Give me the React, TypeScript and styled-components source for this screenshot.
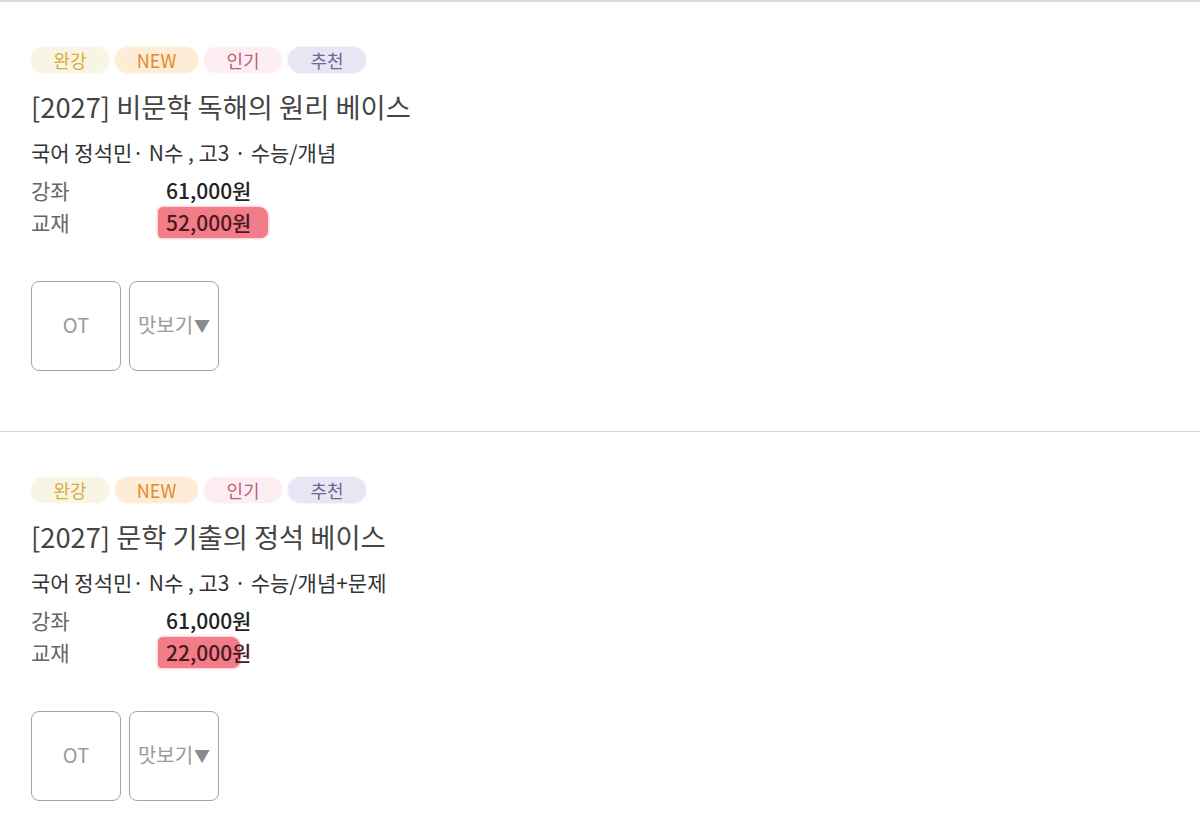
import React from 'react'
import styled, { createGlobalStyle } from 'styled-components'

const GlobalStyle = createGlobalStyle`
  body {
    margin: 0;
    background: #fff;
    font-family: "Noto Sans CJK KR", "Noto Sans", sans-serif;
    color: #333;
  }
`

interface Course {
  title: string
  meta: string
  lecture: string
  book: string
  marker: number
}

const courses: Course[] = [
  {
    title: '[2027] 비문학 독해의 원리 베이스',
    meta: '국어 정석민· N수 , 고3 · 수능/개념',
    lecture: '61,000원',
    book: '52,000원',
    marker: 110,
  },
  {
    title: '[2027] 문학 기출의 정석 베이스',
    meta: '국어 정석민· N수 , 고3 · 수능/개념+문제',
    lecture: '61,000원',
    book: '22,000원',
    marker: 82,
  },
]

const tags = [
  { label: '완강', bg: '#f8f5e4', fg: '#dcaa3a' },
  { label: 'NEW', bg: '#fdecd6', fg: '#e3892c' },
  { label: '인기', bg: '#fdeef2', fg: '#c25c7e' },
  { label: '추천', bg: '#e8e6f5', fg: '#6c6796' },
]

export default function App() {
  return (
    <>
      <GlobalStyle />
      <List>
        {courses.map(c => (
          <CourseCard key={c.title} course={c} />
        ))}
      </List>
    </>
  )
}

function CourseCard({ course }: { course: Course }) {
  return (
    <Section>
      <TagRow>
        {tags.map(t => (
          <Tag key={t.label} $bg={t.bg} $fg={t.fg}>{t.label}</Tag>
        ))}
      </TagRow>
      <Title>{course.title}</Title>
      <Meta>{course.meta}</Meta>
      <Prices>
        <PriceLabel>강좌</PriceLabel>
        <PriceValue>{course.lecture}</PriceValue>
        <PriceLabel>교재</PriceLabel>
        <PriceValue>
          <Marked $reach={course.marker}>{course.book}</Marked>
        </PriceValue>
      </Prices>
      <Buttons>
        <SquareButton>OT</SquareButton>
        <SquareButton>
          맛보기<Arrow>▼</Arrow>
        </SquareButton>
      </Buttons>
    </Section>
  )
}

const List = styled.div`
  width: 1200px;
`

const Section = styled.section`
  border-top: 2px solid #d9d9d9;
  padding: 45px 31px 60px;
  &:not(:first-child) {
    border-top-width: 1px;
    border-top-color: #d3d3d3;
  }
`

const TagRow = styled.div`
  display: flex;
  gap: 6px;
`

const Tag = styled.span<{ $bg: string; $fg: string }>`
  display: flex;
  align-items: center;
  justify-content: center;
  height: 26px;
  width: 78px;
  border-radius: 13px;
  background: ${p => p.$bg};
  color: ${p => p.$fg};
  font-size: 18px;
  box-shadow: 0 0 3px ${p => p.$bg};
  &:nth-child(2) {
    width: 83px;
  }
`

const Title = styled.h2`
  margin: 16px 0 0;
  font-size: 27.3px;
  line-height: 34px;
  font-weight: 400;
  color: #444;
`

const Meta = styled.div`
  margin-top: 16px;
  font-size: 21px;
  line-height: 26px;
  color: #333;
`

const Prices = styled.div`
  margin-top: 9px;
  display: grid;
  grid-template-columns: 135px auto;
  grid-auto-rows: 32px;
  align-items: center;
  font-size: 21px;
`

const PriceLabel = styled.span`
  color: #666;
`

const PriceValue = styled.span`
  color: #222;
  font-weight: 500;
`

const Marked = styled.span<{ $reach: number }>`
  position: relative;
  z-index: 0;
  color: #4a1a22;
  &::before {
    content: '';
    position: absolute;
    z-index: -1;
    left: -8px;
    top: 0;
    bottom: -1px;
    width: ${p => p.$reach}px;
    background: #f27c88;
    border-radius: 5px 9px 7px 4px;
    box-shadow: 0 0 3px #f4939c;
  }
`

const Buttons = styled.div`
  margin-top: 43px;
  display: flex;
  gap: 8px;
`

const SquareButton = styled.div`
  width: 88px;
  height: 88px;
  border: 1px solid #a5a5a5;
  border-radius: 8px;
  display: flex;
  align-items: center;
  justify-content: center;
  padding-bottom: 3px;
  box-sizing: content-box;
  height: 85px;
  font-size: 20px;
  color: #9a9a9a;
`

const Arrow = styled.span`
  color: #8a8a8a;
  font-size: 16px;
  margin-left: 1px;
`
